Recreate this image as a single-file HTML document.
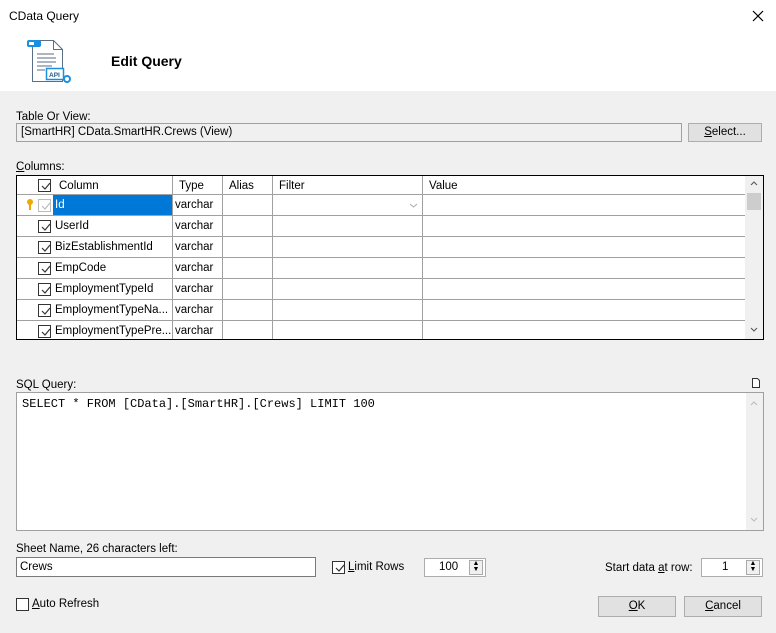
<!DOCTYPE html>
<html><head><style>
body{margin:0;width:776px;height:633px;background:#f0f0f0;font-family:"Liberation Sans",sans-serif;font-size:11.5px;color:#000;position:relative;overflow:hidden}
.a{position:absolute}
.box{position:absolute;background:#fff;border:1px solid #adadad;box-sizing:border-box}
.btn{position:absolute;background:#e1e1e1;border:1px solid #adadad;box-sizing:border-box;text-align:center;line-height:18px}
.cb{position:absolute;width:13px;height:13px;border:1px solid #333;box-sizing:border-box;background:#fff}
.cb svg{position:absolute;left:1px;top:1px}
.row{position:absolute;left:0;width:728px;height:21px;border-bottom:1px solid #a0a0a0;box-sizing:border-box}
.c{position:absolute;top:0;height:20px;line-height:20px;border-right:1px solid #a0a0a0;box-sizing:border-box;padding-left:2px;white-space:nowrap;overflow:hidden}
</style></head><body>
<div class="a" style="left:0;top:0;width:776px;height:91px;background:#fff"></div>
<div class="a" style="left:9px;top:9px;font-size:12px">CData Query</div>
<svg class="a" style="left:752px;top:10px" width="12" height="12"><path d="M1 1L11 11M11 1L1 11" stroke="#000" stroke-width="1.2"/></svg>
<svg class="a" style="left:26px;top:38px" width="46" height="46" viewBox="0 0 46 46">
<path d="M6.5 2.5h21l9 9v32h-30z" fill="#fff" stroke="#5a6e86" stroke-width="1"/>
<path d="M27.5 2.5v9h9" fill="none" stroke="#5a6e86"/>
<rect x="1" y="2" width="14" height="7" rx="2" fill="#1a8fe0"/>
<rect x="3" y="4" width="5" height="3" fill="#fff"/>
<path d="M11 16h17M11 20h19M11 24h19M11 28h15M11 32h8" stroke="#5a6e86"/>
<rect x="20.5" y="30.5" width="17" height="11" fill="#fff" stroke="#1a8fe0" stroke-width="1.5"/>
<text x="23" y="39" font-size="6.5" font-family="Liberation Sans" font-weight="bold" fill="#1a5a90">API</text>
<circle cx="41" cy="41" r="3" fill="none" stroke="#1a8fe0" stroke-width="2"/>
</svg>
<div class="a" style="left:111px;top:53px;font-size:14px;font-weight:bold">Edit Query</div>

<div class="a" style="left:16px;top:111px">Table Or View:</div>
<div class="box" style="left:16px;top:123px;width:666px;height:19px;background:#f0f0f0;border-color:#a0a0a0;padding-left:4px;line-height:17px">[SmartHR] CData.SmartHR.Crews (View)</div>
<div class="btn" style="left:688px;top:123px;width:74px;height:19px;line-height:17px"><u>S</u>elect...</div>

<div class="a" style="left:16px;top:161px"><u>C</u>olumns:</div>
<div class="a" style="left:16px;top:175px;width:748px;height:165px;border:1px solid #000;box-sizing:border-box;background:#fff;overflow:hidden">
 <div class="row" style="top:0;height:19px">
  <div class="c" style="left:0;width:36px;border-right:none"></div>
  <div class="c" style="left:36px;width:120px;padding-left:6px">Column</div>
  <div class="c" style="left:156px;width:50px;padding-left:6px">Type</div>
  <div class="c" style="left:206px;width:50px;padding-left:6px">Alias</div>
  <div class="c" style="left:256px;width:150px;padding-left:6px">Filter</div>
  <div class="c" style="left:406px;width:322px;padding-left:6px;border-right:none">Value</div>
 </div>
 <div class="cb" style="left:21px;top:3px"><svg width="11" height="11"><path d="M2 5l3 3 5-6" fill="none" stroke="#333" stroke-width="1.2"/></svg></div>
 <div id="rows"></div>
 <div class="a" style="left:728px;top:0;width:18px;height:163px;background:#f0f0f0"></div>
 <svg class="a" style="left:733px;top:4px" width="8" height="6"><path d="M1 5l3-3 3 3" fill="none" stroke="#555"/></svg>
 <div class="a" style="left:730px;top:17px;width:14px;height:17px;background:#cdcdcd"></div>
 <svg class="a" style="left:733px;top:151px" width="8" height="6"><path d="M1 1l3 3 3-3" fill="none" stroke="#555"/></svg>
</div>

<div class="a" style="left:16px;top:379px">SQL Query:</div>
<svg class="a" style="left:751px;top:377px" width="10" height="12"><path d="M1.5 1.5h5l2 2v7h-7z" fill="#fff" stroke="#333"/></svg>
<div class="box" style="left:16px;top:392px;width:748px;height:139px;border-color:#a0a0a0;font-family:'Liberation Mono',monospace;font-size:12px;padding:4px 5px">SELECT * FROM [CData].[SmartHR].[Crews] LIMIT 100</div>
<div class="a" style="left:746px;top:393px;width:17px;height:137px;background:#f0f0f0"></div>
<svg class="a" style="left:750px;top:400px" width="8" height="6"><path d="M1 5l3-3 3 3" fill="none" stroke="#bbb"/></svg>
<svg class="a" style="left:750px;top:517px" width="8" height="6"><path d="M1 1l3 3 3-3" fill="none" stroke="#bbb"/></svg>

<div class="a" style="left:16px;top:543px">Sheet Name, 26 characters left:</div>
<div class="box" style="left:16px;top:557px;width:300px;height:20px;border-color:#7a7a7a;padding-left:3px;line-height:18px">Crews</div>
<div class="cb" style="left:332px;top:561px"><svg width="11" height="11"><path d="M2 5l3 3 5-6" fill="none" stroke="#333" stroke-width="1.2"/></svg></div>
<div class="a" style="left:348px;top:561px"><u>L</u>imit Rows</div>
<div class="box" style="left:424px;top:558px;width:62px;height:19px;padding-left:14px;line-height:17px">100</div>
<div class="a" style="left:469px;top:560px;width:14px;height:15px;border:1px solid #aaa;box-sizing:border-box;background:#f0f0f0;font-size:7px;text-align:center;line-height:6px">▲<br>▼</div>
<div class="a" style="left:605px;top:562px">Start data <u>a</u>t row:</div>
<div class="box" style="left:701px;top:558px;width:62px;height:19px;padding-left:20px;line-height:17px">1</div>
<div class="a" style="left:746px;top:560px;width:14px;height:15px;border:1px solid #aaa;box-sizing:border-box;background:#f0f0f0;font-size:7px;text-align:center;line-height:6px">▲<br>▼</div>

<div class="cb" style="left:16px;top:598px"></div>
<div class="a" style="left:32px;top:598px"><u>A</u>uto Refresh</div>
<div class="btn" style="left:598px;top:596px;width:78px;height:21px"><u>O</u>K</div>
<div class="btn" style="left:684px;top:596px;width:78px;height:21px"><u>C</u>ancel</div>

<script>
var names=["Id","UserId","BizEstablishmentId","EmpCode","EmploymentTypeId","EmploymentTypeNa...","EmploymentTypePre..."];
var h="";
for(var i=0;i<7;i++){
 var t=19+i*21;
 var sel=i==0;
 h+='<div class="row" style="top:'+t+'px">'+
 '<div class="c" style="left:0;width:36px;border-right:none"></div>'+
 '<div class="c" style="left:36px;width:120px;'+(sel?'background:#0078d7;color:#fff;':'')+'">'+names[i]+'</div>'+
 '<div class="c" style="left:156px;width:50px">varchar</div>'+
 '<div class="c" style="left:206px;width:50px"></div>'+
 '<div class="c" style="left:256px;width:150px">'+(sel?'<svg style="position:absolute;right:4px;top:8px" width="9" height="5"><path d="M1 1l3.5 3 3.5-3" fill="none" stroke="#aaa"/></svg>':'')+'</div>'+
 '<div class="c" style="left:406px;width:322px;border-right:none"></div></div>'+
 '<div class="cb" style="left:21px;top:'+(t+4)+'px;'+(sel?'border-color:#bbb':'')+'"><svg width="11" height="11"><path d="M2 5l3 3 5-6" fill="none" stroke="'+(sel?'#bbb':'#333')+'" stroke-width="1.2"/></svg></div>';
}
h+='<svg class="a" style="left:9px;top:23px" width="8" height="12"><circle cx="4" cy="3" r="3" fill="#f0a800"/><rect x="3" y="5" width="2" height="6" fill="#f0a800"/></svg>';
document.getElementById("rows").innerHTML=h;
</script>
</body></html>
